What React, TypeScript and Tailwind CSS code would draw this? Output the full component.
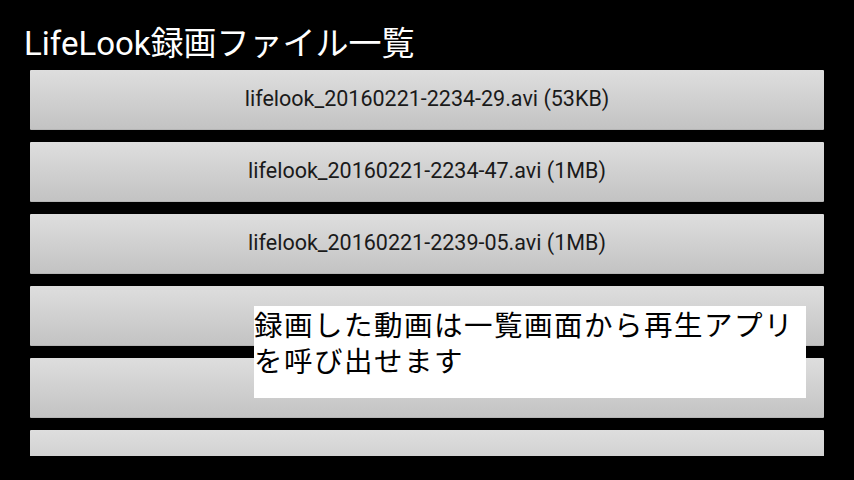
import React from "react";

const files = [
  "lifelook_20160221-2234-29.avi (53KB)",
  "lifelook_20160221-2234-47.avi (1MB)",
  "lifelook_20160221-2239-05.avi (1MB)",
  "",
  "",
  "",
];

export default function App() {
  return (
    <div
      className="relative w-[854px] h-[480px] bg-black overflow-hidden"
      style={{ fontFamily: "Roboto, 'Noto Sans CJK JP', sans-serif" }}
    >
      <div className="flex flex-col">
        <div className="h-[70px] pl-[24px] pt-[25px] text-white text-[33px] leading-[38px]">
          LifeLook録画ファイル一覧
        </div>
        <div className="flex flex-col gap-[12px] px-[30px] h-[386px] overflow-hidden">
          {files.map((f, i) => (
            <div
              key={i}
              className="shrink-0 h-[60px] w-[794px] rounded-[1px] bg-gradient-to-b from-[#dedede] to-[#c3c3c3] border-b border-[#b5b5b5] flex items-center justify-center text-[21.5px] text-[#1a1a1a]"
            >
              {f}
            </div>
          ))}
        </div>
      </div>
      <div
        className="absolute left-[254px] top-[306px] w-[552px] h-[92px] bg-white text-black text-[28.5px] leading-[36px] tracking-[1.5px] whitespace-nowrap"
        style={{ fontFamily: "'Noto Sans CJK JP', sans-serif" }}
      >
        <div>録画した動画は一覧画面から再生アプリ</div>
        <div>を呼び出せます</div>
      </div>
    </div>
  );
}
